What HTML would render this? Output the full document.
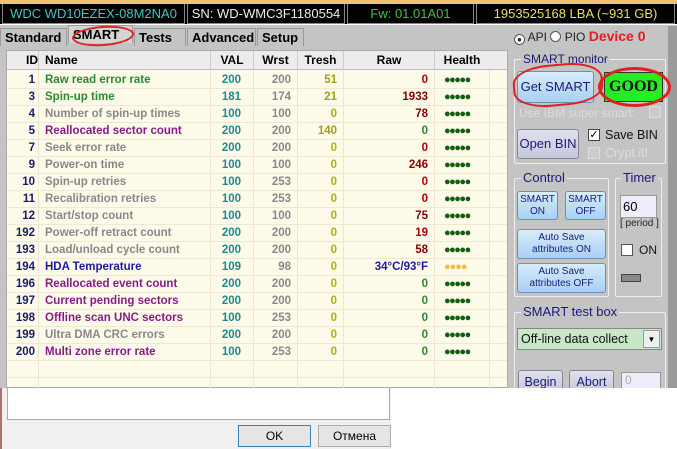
<!DOCTYPE html>
<html><head><meta charset="utf-8"><style>
*{margin:0;padding:0;box-sizing:border-box}
body{width:677px;height:449px;overflow:hidden;background:#fff;font-family:"Liberation Sans",Tahoma,sans-serif;position:relative}
.a{position:absolute}
.info{top:4px;height:20px;background:#000;font-size:13px;line-height:20px;text-align:center;border:1px solid #888;border-top:none}
.tab{position:absolute;top:28px;height:18px;font-size:13px;font-weight:bold;line-height:18px;padding:0 4px;border:1px solid #999;border-bottom:none;background:#d8d8d8}
.tbl{left:6px;top:50px;width:502px;height:338px;background:#fffbeb;border:1px solid #aaa}
.hdr{position:absolute;left:0;top:0;width:500px;height:19px;background:#ececec;border-bottom:1px solid #bbb;font-size:12px;font-weight:bold;line-height:19px}
.hdr span{position:absolute;top:0;border-left:1px solid #ccc;text-align:center}
.row{position:absolute;left:0;width:500px;height:17px;border-bottom:1px solid #efe9d4;font-size:11.5px;font-weight:bold;line-height:17px}
.row span{position:absolute;top:0}
.vl{position:absolute;top:19px;width:1px;height:318px;background:#ece6d0}
.btn{position:absolute;background:linear-gradient(#d8ecfb,#a9d0f3);border:1px solid #6c8fb6;border-radius:3px;color:#1a1a7a;text-align:center;font-size:10px;line-height:12px}
.grp{position:absolute;border:1px solid #eee;border-radius:2px}
.gt{position:absolute;background:#c4c4c4;color:#1a1a7a;font-size:12px;padding:0 2px;line-height:14px}
</style></head><body>
<div class="a" style="left:0;top:0;width:677px;height:4px;background:#efc070"></div>
<div class="a" style="left:0;top:4px;width:677px;height:20px;background:#000"></div>
<div class="a info" style="left:2px;width:183px;color:#3ec7c7">WDC WD10EZEX-08M2NA0</div>
<div class="a info" style="left:187px;width:158px;color:#eee">SN: WD-WMC3F1180554</div>
<div class="a info" style="left:347px;width:127px;color:#3ec43e">Fw: 01.01A01</div>
<div class="a info" style="left:476px;width:199px;color:#e8e05a">1953525168 LBA (~931 GB)</div>
<div class="a" style="left:0;top:24px;width:677px;height:364px;background:#c4c4c4"></div>
<div class="a" style="left:0;top:24px;width:677px;height:1px;background:#fff"></div>
<div class="tab" style="left:0;width:67px;background:#c4c4c4">Standard</div>
<div class="tab" style="left:68px;top:25px;width:65px;background:#d4d4d4">SMART</div>
<div class="a" style="left:72px;top:26px;width:62px;height:20px;border:2px solid #d22;border-radius:50%;transform:rotate(-4deg)"></div>
<div class="tab" style="left:134px;width:52px;background:#c4c4c4">Tests</div>
<div class="tab" style="left:187px;width:69px;background:#c4c4c4">Advanced</div>
<div class="tab" style="left:257px;width:47px;background:#c4c4c4">Setup</div>
<div class="a" style="left:514px;top:29px;font-size:12px;color:#222;line-height:14px">
<span style="display:inline-block;width:11px;height:11px;border:1px solid #555;border-radius:50%;background:#fff;vertical-align:-1px;text-align:center;font-size:8px;line-height:9px">●</span> API <span style="display:inline-block;width:11px;height:11px;border:1px solid #555;border-radius:50%;background:#fff;vertical-align:-1px"></span> PIO <b style="color:#e02020;font-size:14px">Device 0</b></div>
<div class="a" style="left:668px;top:26px;width:9px;height:362px;background:#9a9a9a"></div>

<div class="a tbl">
<div class="hdr">
<span style="left:0;width:31px;border:none;text-align:right;padding-right:0">ID</span>
<span style="left:31px;width:172px;text-align:left;padding-left:6px">Name</span>
<span style="left:203px;width:43px">VAL</span>
<span style="left:246px;width:44px">Wrst</span>
<span style="left:290px;width:46px">Tresh</span>
<span style="left:336px;width:91px">Raw</span>
<span style="left:427px;width:55px">Health</span>
<span style="left:482px;width:18px"></span>
</div>
<div class="vl" style="left:31px"></div><div class="vl" style="left:203px"></div><div class="vl" style="left:246px"></div><div class="vl" style="left:290px"></div><div class="vl" style="left:336px"></div><div class="vl" style="left:427px"></div><div class="vl" style="left:482px"></div>
<div id="rows"></div>
</div>
<script>
var d=[
[1,"Raw read error rate","#2a8a2a",200,200,51,"0","#a00"],
[3,"Spin-up time","#2a8a2a",181,174,21,"1933","#800"],
[4,"Number of spin-up times","#888",100,100,0,"78","#800"],
[5,"Reallocated sector count","#8a1a8a",200,200,140,"0","#2a8a2a"],
[7,"Seek error rate","#888",200,200,0,"0","#a00"],
[9,"Power-on time","#888",100,100,0,"246","#800"],
[10,"Spin-up retries","#888",100,253,0,"0","#a00"],
[11,"Recalibration retries","#888",100,253,0,"0","#a00"],
[12,"Start/stop count","#888",100,100,0,"75","#800"],
[192,"Power-off retract count","#888",200,200,0,"19","#a00"],
[193,"Load/unload cycle count","#888",200,200,0,"58","#800"],
[194,"HDA Temperature","#1a1aaa",109,98,0,"34°C/93°F","#1a1aaa"],
[196,"Reallocated event count","#8a1a8a",200,200,0,"0","#2a8a2a"],
[197,"Current pending sectors","#8a1a8a",200,200,0,"0","#2a8a2a"],
[198,"Offline scan UNC sectors","#8a1a8a",100,253,0,"0","#2a8a2a"],
[199,"Ultra DMA CRC errors","#888",200,200,0,"0","#2a8a2a"],
[200,"Multi zone error rate","#8a1a8a",100,253,0,"0","#2a8a2a"]];
var h="";
for(var i=0;i<19;i++){var t=21+i*17;var r=d[i];
if(!r){h+='<div class="row" style="top:'+t+'px"></div>';continue;}
var tc=r[5]>0?"#a0a020":"#b0b000";
var hl=r[0]==194?'<span style="left:437px;color:#f0c040;font-size:11px;letter-spacing:-1px">●●●●</span>':'<span style="left:437px;color:#106010;font-size:11px;letter-spacing:-1.5px">●●●●●</span>';
h+='<div class="row" style="top:'+t+'px"><span style="left:0;width:28px;text-align:right;color:#1a1a6a">'+r[0]+'</span><span style="left:38px;color:'+r[2]+'">'+r[1]+'</span><span style="left:203px;width:31px;text-align:right;color:#1a8a8a">'+r[3]+'</span><span style="left:246px;width:38px;text-align:right;color:#888">'+r[4]+'</span><span style="left:290px;width:40px;text-align:right;color:'+tc+'">'+r[5]+'</span><span style="left:336px;width:85px;text-align:right;color:'+r[7]+'">'+r[6]+'</span>'+hl+'</div>';}
document.getElementById("rows").innerHTML=h;
</script>

<div class="grp" style="left:514px;top:59px;width:152px;height:105px"></div>
<div class="gt" style="left:521px;top:52px">SMART monitor</div>
<div class="btn" style="left:517px;top:71px;width:77px;height:32px;font-size:13px;line-height:30px">Get SMART</div>
<div class="a" style="left:513px;top:64px;width:90px;height:42px;border:2px solid #d22;border-radius:40%;transform:rotate(-5deg)"></div>
<div class="a" style="left:604px;top:72px;width:59px;height:30px;background:#22ee22;border:1px solid #333;font-family:'Liberation Serif',serif;font-weight:bold;font-size:16px;line-height:28px;text-align:center;color:#111">GOOD</div>
<div class="a" style="left:598px;top:67px;width:73px;height:40px;border:3px solid #d22;border-radius:50%"></div>
<div class="a" style="left:519px;top:106px;font-size:12px;color:#ddd">Use IBM super smart:</div>
<div class="a" style="left:649px;top:106px;width:12px;height:12px;border:1px solid #ddd;background:#ccc"></div>
<div class="btn" style="left:517px;top:129px;width:62px;height:30px;background:linear-gradient(#e0e0f0,#c8c8dc);border-color:#888;font-size:13px;line-height:28px">Open BIN</div>
<div class="a" style="left:588px;top:129px;width:12px;height:12px;border:1px solid #444;background:#fff;font-size:11px;line-height:10px;text-align:center">✓</div>
<div class="a" style="left:605px;top:128px;font-size:12.5px;color:#111">Save BIN</div>
<div class="a" style="left:588px;top:147px;width:12px;height:12px;border:1px solid #ddd;background:#ccc"></div>
<div class="a" style="left:605px;top:146px;font-size:12.5px;color:#ddd">Crypt it!</div>

<div class="grp" style="left:514px;top:178px;width:95px;height:119px"></div>
<div class="gt" style="left:521px;top:171px;font-size:13px">Control</div>
<div class="btn" style="left:517px;top:191px;width:41px;height:29px;padding-top:2px">SMART<br>ON</div>
<div class="btn" style="left:565px;top:191px;width:41px;height:29px;padding-top:2px">SMART<br>OFF</div>
<div class="btn" style="left:517px;top:229px;width:89px;height:30px;padding-top:2px">Auto Save<br>attributes ON</div>
<div class="btn" style="left:517px;top:263px;width:89px;height:30px;padding-top:2px">Auto Save<br>attributes OFF</div>
<div class="grp" style="left:615px;top:178px;width:47px;height:119px"></div>
<div class="gt" style="left:621px;top:171px;font-size:13px">Timer</div>
<div class="a" style="left:620px;top:195px;width:37px;height:23px;background:#eeeefa;border:1px solid #999;font-size:13px;line-height:21px;padding-left:2px">60</div>
<div class="a" style="left:620px;top:218px;font-size:10px;color:#222">[ period ]</div>
<div class="a" style="left:621px;top:244px;width:12px;height:12px;border:1px solid #555;background:#fff"></div>
<div class="a" style="left:639px;top:243px;font-size:12px;color:#111">ON</div>
<div class="a" style="left:621px;top:274px;width:20px;height:8px;background:#888;border:1px solid #444"></div>

<div class="grp" style="left:514px;top:312px;width:152px;height:80px"></div>
<div class="gt" style="left:521px;top:305px;font-size:13px">SMART test box</div>
<div class="a" style="left:517px;top:328px;width:145px;height:22px;background:#c8e6c8;border:1px solid #888;font-size:12.5px;line-height:20px;padding-left:3px;color:#111">Off-line data collect</div>
<div class="a" style="left:643px;top:330px;width:17px;height:18px;background:#eee;border:1px solid #999;font-size:8px;text-align:center;line-height:18px">▼</div>
<div class="btn" style="left:518px;top:370px;width:45px;height:22px;background:linear-gradient(#e0e0f0,#c8c8dc);border-color:#888;font-size:12.5px;line-height:22px">Begin</div>
<div class="btn" style="left:569px;top:370px;width:45px;height:22px;background:linear-gradient(#e0e0f0,#c8c8dc);border-color:#888;font-size:12.5px;line-height:22px">Abort</div>
<div class="a" style="left:621px;top:372px;width:40px;height:20px;background:#eeeefa;border:1px solid #999;font-size:12px;color:#aaa;padding-left:3px">0</div>

<div class="a" style="left:0;top:388px;width:391px;height:61px;background:#f0f0f0"></div>
<div class="a" style="left:391px;top:388px;width:286px;height:61px;background:#fff"></div>
<div class="a" style="left:0;top:388px;width:2px;height:61px;background:#b07070"></div>
<div class="a" style="left:7px;top:388px;width:383px;height:32px;background:#fff;border:1px solid #aaa;border-top:none"></div>
<div class="a" style="left:238px;top:425px;width:73px;height:22px;background:#e5e5e5;border:1px solid #3c7fb1;font-size:12px;line-height:20px;text-align:center">OK</div>
<div class="a" style="left:318px;top:425px;width:73px;height:22px;background:#e5e5e5;border:1px solid #acacac;font-size:12px;line-height:20px;text-align:center">Отмена</div>
</body></html>
